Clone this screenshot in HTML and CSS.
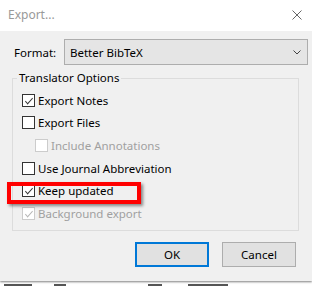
FILE: index.html
```html
<!DOCTYPE html>
<html lang="en">
<head>
<meta charset="UTF-8">
<title>Export...</title>
<link rel="stylesheet" href="styles.css">
</head>
<body>
  <!-- Ventana del dialogo -->
  <div class="dialog">
    <div class="titlebar">
      <span class="title">Export...</span>
      <svg class="close" width="10" height="10" viewBox="0 0 10 10">
        <path d="M0.5 0.5 L9.5 9.5 M9.5 0.5 L0.5 9.5" stroke="#666" stroke-width="1" fill="none"/>
      </svg>
    </div>
    <div class="content">
      <div class="format-row">
        <span class="label">Format:</span>
        <div class="select">
          <span>Better BibTeX</span>
          <svg width="8" height="5" viewBox="0 0 8 5">
            <path d="M0.5 0.5 L4 4 L7.5 0.5" stroke="#444" stroke-width="1" fill="none"/>
          </svg>
        </div>
      </div>
      <fieldset class="group">
        <legend>Translator Options</legend>
        <div class="row"><span class="box checked"></span>Export Notes</div>
        <div class="row"><span class="box"></span>Export Files</div>
        <div class="row indent disabled"><span class="box"></span>Include Annotations</div>
        <div class="row"><span class="box"></span>Use Journal Abbreviation</div>
        <div class="row"><span class="box checked"></span>Keep updated</div>
        <div class="row disabled"><span class="box checked"></span>Background export</div>
      </fieldset>
      <div class="buttons">
        <div class="btn default">OK</div>
        <div class="btn">Cancel</div>
      </div>
      <!-- Resaltado rojo -->
      <div class="highlight"></div>
    </div>
  </div>
  <div class="behind">
    <span style="width: 28px; margin-left: 4px;"></span>
    <span style="width: 12px; margin-left: 22px;"></span>
    <span style="width: 14px; margin-left: 82px;"></span>
    <span style="width: 40px; margin-left: 26px;"></span>
  </div>
</body>
</html>
```

FILE: styles.css
```css
body {
  margin: 0;
  width: 312px;
  height: 286px;
  overflow: hidden;
  background: #fff;
  font-family: "Noto Sans", sans-serif;
  font-size: 11.5px;
  color: #000;
}
.dialog {
  height: 281px;
  background: #f0f0f0;
  box-shadow: 0 1px 2px rgba(0, 0, 0, 0.5);
  display: flex;
  flex-direction: column;
}
.titlebar {
  height: 29px;
  background: #fff;
  display: flex;
  align-items: center;
  justify-content: space-between;
  padding: 0 10px 2px 8px;
}
.title {
  color: #999;
  font-size: 12px;
}
.content {
  position: relative;
  flex: 1;
}
.format-row {
  display: flex;
  align-items: center;
  margin-top: 8px;
  padding-left: 14px;
}
.label {
  width: 50px;
}
.select {
  width: 231px;
  height: 24px;
  border: 1px solid #adadad;
  background: #e5e5e5;
  display: flex;
  align-items: center;
  justify-content: space-between;
  padding: 0 6px 0 5px;
  box-sizing: content-box;
}
.select span {
  margin-left: 0;
}
.group {
  margin: 5px 13px 0 12px;
  padding: 3px 0 5px 4px;
  border: 1px solid #dcdcdc;
}
.group legend {
  padding: 0 2px;
  line-height: 16px;
}
.row {
  height: 22.6px;
  display: flex;
  align-items: center;
  padding-left: 5px;
}
.row.indent {
  padding-left: 18px;
}
.row.disabled {
  color: #a0a0a0;
}
.box {
  width: 11px;
  height: 11px;
  border: 1px solid #333;
  background: #fff;
  margin-right: 3px;
  position: relative;
}
.disabled .box {
  border-color: #ccc;
}
.box.checked::after {
  content: "";
  position: absolute;
  left: 2px;
  top: 0px;
  width: 7px;
  height: 3px;
  border-left: 1px solid #333;
  border-bottom: 1px solid #333;
  transform: translate(0, 3px) rotate(-48deg) skewX(-8deg);
  transform-origin: center;
}
.disabled .box.checked::after {
  border-color: #b5b5b5;
}
.buttons {
  display: flex;
  justify-content: flex-end;
  gap: 13px;
  margin-top: 11px;
  padding-right: 16px;
}
.btn {
  width: 72px;
  height: 23px;
  border: 1px solid #adadad;
  background: #e1e1e1;
  display: flex;
  align-items: center;
  justify-content: center;
}
.btn.default {
  width: 70px;
  height: 21px;
  border: 2px solid #0078d7;
}
.highlight {
  position: absolute;
  left: 7px;
  top: 151px;
  width: 126px;
  height: 14px;
  border: 4px solid #f00;
  box-shadow: 2px 2px 3px rgba(0, 0, 0, 0.45);
}
.behind {
  display: flex;
  height: 5px;
  align-items: flex-end;
}
.behind span {
  height: 2px;
  background: #555;
}
```
